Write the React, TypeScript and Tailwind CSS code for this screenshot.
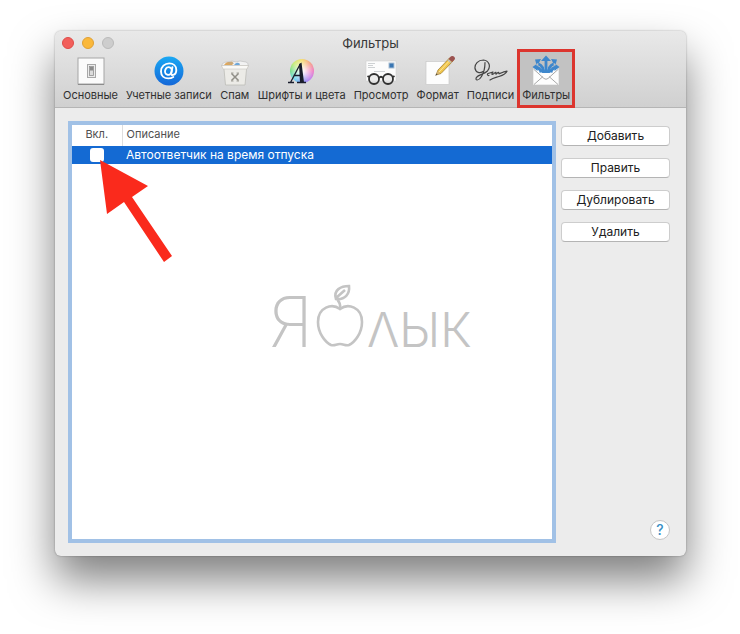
import type { ReactNode } from "react";

function SwitchIcon() {
  return (
    <svg width="30" height="32" viewBox="0 0 30 32" aria-hidden="true">
      <rect x="2" y="3" width="26" height="26" fill="#fbfbfb" stroke="#a5a5a5" />
      <path d="M2 29.500h26" stroke="#8c8c8c" />
      <rect x="11.500" y="9.500" width="8" height="13" fill="#ececec" stroke="#a8a8a8" />
      <rect x="13.500" y="11.500" width="4" height="9" fill="#dcdcdc" stroke="#8f8f8f" strokeWidth=".8" />
      <rect x="14" y="12" width="3" height="3.500" fill="#8a8a8a" />
    </svg>
  );
}

function AtIcon() {
  return (
    <svg width="30" height="32" viewBox="0 0 30 32" aria-hidden="true">
      <defs>
        <linearGradient id="at-bg" x1="0" y1="0" x2="0" y2="1">
          <stop offset="0" stopColor="#1ba8f3" />
          <stop offset="1" stopColor="#1467d8" />
        </linearGradient>
      </defs>
      <circle cx="15" cy="16" r="14.500" fill="url(#at-bg)" />
      <g fill="none" stroke="#fff" strokeWidth="1.900" strokeLinecap="round">
        <ellipse cx="14.400" cy="16" rx="3.300" ry="3.900" transform="rotate(18 14.4 16)" />
        <path d="M18.400 12.200l-1.100 5.600c-.3 2 .6 2.400 1.800 2.100 2-.5 3.200-2.700 3.200-5 0-4-3-6.500-7-6.500-4.700 0-8.300 3.400-8.300 8 0 4.300 3.200 7 7.300 7 2 0 3.600-.5 5-1.400" />
      </g>
    </svg>
  );
}

function JunkIcon() {
  return (
    <svg width="30" height="32" viewBox="0 0 30 32" aria-hidden="true">
      <path d="M2 11q0-4 5-4l5-1 4 1 4-1 6 1q3 1 2 4z" fill="#f2f2f2" stroke="#bbb" strokeWidth=".6" />
      <path d="M4 10q3-5 9-1.500l-1 2H4z" fill="#dda75d" />
      <path d="M14 10q3-4 6-1l-1 2h-5z" fill="#6fa7d8" />
      <path d="M7 7.500l5-1 2 2-4 1z" fill="#c9a878" />
      <path d="M1.500 10.500h27l-2 4-1.500 15.500H5.500L4 14.500z" fill="#ecebe7" stroke="#bdbcb8" strokeWidth=".8" />
      <path d="M1.500 10.500h27l-1.500 3.500H3z" fill="#faf9f6" stroke="#c7c5bf" strokeWidth=".6" />
      <path d="M11.500 18.500l7 7M18.500 18.500l-7 7" stroke="#908e87" strokeWidth="1.500" />
      <path d="M11 18h2.500M16.500 18H19M11 26h2.500M16.500 26H19" stroke="#908e87" strokeWidth=".8" />
    </svg>
  );
}

function FontsIcon() {
  return (
    <div
      aria-hidden="true"
      className="relative h-6 w-6 rounded-full bg-[radial-gradient(circle,#fff_5%,transparent_75%),conic-gradient(#f5da62,#f59a7b,#ee72be,#b777ef,#718cf1,#62d5ed,#69dc82,#c5e969,#f5da62)]"
    >
      <svg className="absolute -left-1 top-0" width="30" height="26" viewBox="0 0 30 26">
        <path
          d="M2 23.500h6M11 23.500h9M4.500 23.500L14.500 4.500M7.500 16.500h7"
          fill="none"
          stroke="#191c2c"
          strokeWidth="1.300"
        />
        <path d="M13 5.500l2.500-2L18 23.500h-4z" fill="#191c2c" />
      </svg>
    </div>
  );
}

function ViewIcon() {
  return (
    <svg width="34" height="32" viewBox="0 0 34 32" aria-hidden="true">
      <rect x="2" y="6" width="30" height="20" fill="#fcfcfc" stroke="#d0d0d0" strokeWidth=".6" />
      <path d="M4 8.500h7M4 10.500h5M4 12.500h7M10 16.500h11" stroke="#c2c5c8" strokeWidth=".8" />
      <rect x="25" y="8" width="5" height="5" fill="#3976b3" stroke="#a9bed2" />
      <g fill="#e6e6e6" fillOpacity=".7" stroke="#303030" strokeWidth="1.800">
        <circle cx="10" cy="24" r="5" />
        <circle cx="24" cy="24" r="5" />
        <path d="M15 23q2-2.500 4 0M5 22l-1.500-1M29 22l1.500-1" fill="none" />
      </g>
    </svg>
  );
}

function ComposeIcon() {
  return (
    <svg width="34" height="32" viewBox="0 0 34 32" aria-hidden="true">
      <rect x="5" y="6.500" width="23" height="23" fill="#fdfdfd" stroke="#c9c9c9" strokeWidth=".7" />
      <path d="M15 20l2-5L29 2.500l3.500 3L20 18.500z" fill="#f1c64c" stroke="#987427" strokeWidth=".7" />
      <path d="M18 17L30.500 3.700" stroke="#ffe797" strokeWidth="1" />
      <path d="M27.500 4L30 1.300q2-1 3.400.7 1.200 1.600 0 2.800L31 7z" fill="#9b5250" />
      <path d="M26.800 4.800l3.500 3" stroke="#b9b9b9" strokeWidth="1.300" />
      <path d="M14.500 20.500l2.500-4.500 2 2z" fill="#d4b477" />
      <path d="M14 21l1.800-2.500 .8.800z" fill="#333" />
    </svg>
  );
}

function SignatureIcon() {
  return (
    <svg width="34" height="32" viewBox="0 0 34 32" aria-hidden="true">
      <path
        d="M11 7.500c0 5-1 10-3.500 14-2.500 4.500-7 4.500-5 .8 2-2.800 8-3 11-6.300 4-5 1-10.500-4-11C4 5 .5 9 1 13.500c1 4.500 5 5 8 3M15 20.500c-1.500.5-2-1.500-1-2l5-1.500c-1 1-1.500 2.500-.6 2.500 1.600-.3 2.600-2.500 3.400-2.200.6.400-.6 2 .3 1.800 1-.3 1.600-2 2.500-1.700.7.400-.3 1.400.8 1.200l3.600-1.400 4-1c-1 2.500-4 4-8 5.300-3 1-6 1.500-9 3.500"
        fill="none"
        stroke="#454545"
        strokeWidth="1.200"
        strokeLinecap="round"
        strokeLinejoin="round"
      />
    </svg>
  );
}

function RulesIcon() {
  return (
    <svg width="34" height="32" viewBox="0 0 34 32" aria-hidden="true">
      <rect x="4" y="13" width="26" height="17" fill="#fdfdfd" stroke="#c4c4c4" strokeWidth=".6" />
      <path d="M5 29.500l9-8M29 29.500l-9-8M4.500 14L15 23.500q2 1.500 4 0L29.500 14" fill="none" stroke="#a8a8a8" strokeWidth="1" />
      <g fill="none" stroke="#3e87cc" strokeWidth="2.800">
        <path d="M17 18V5M14.500 18q0-7-5-9M19.500 18q0-7 5-9M12 17.500Q11.500 13 7 12.500M22 17.500q.5-4.500 5-5" />
      </g>
      <path
        d="M17 .5l-5 5.500h10zM12 4l-6 .5 2 7zM22 4l6 .5-2 7zM3.500 12l5.500-4-.5 8zM30.500 12L25 8l.5 8z"
        fill="#3e87cc"
      />
    </svg>
  );
}

const tabs: { label: string; icon: ReactNode; active?: boolean }[] = [
  { label: "Основные", icon: <SwitchIcon /> },
  { label: "Учетные записи", icon: <AtIcon /> },
  { label: "Спам", icon: <JunkIcon /> },
  { label: "Шрифты и цвета", icon: <FontsIcon /> },
  { label: "Просмотр", icon: <ViewIcon /> },
  { label: "Формат", icon: <ComposeIcon /> },
  { label: "Подписи", icon: <SignatureIcon /> },
  { label: "Фильтры", icon: <RulesIcon />, active: true },
];

const actions = ["Добавить", "Править", "Дублировать", "Удалить"];

function Toolbar() {
  return (
    <header className="rounded-t-md border-b border-[#b5b5b5] bg-linear-to-b from-[#e9e9e9] to-[#d0d0d0]">
      <div className="grid h-5 grid-cols-[1fr_auto_1fr] items-center px-[7px] pt-1">
        <div className="flex gap-2">
          <button aria-label="Закрыть" className="h-3 w-3 rounded-full border border-[#df4b48] bg-[#f25f5b]" />
          <button aria-label="Свернуть" className="h-3 w-3 rounded-full border border-[#dfa034] bg-[#fab83b]" />
          <button aria-label="Развернуть" disabled className="h-3 w-3 rounded-full border border-[#bababa] bg-[#cdcdcd]" />
        </div>
        <h1 className="text-[13px] leading-4 text-[#383838]">Фильтры</h1>
      </div>
      <nav className="flex h-14 px-1">
        {tabs.map((tab) => (
          <button
            key={tab.label}
            className={`relative flex flex-col items-center px-1 pt-1 text-[11px] leading-4 whitespace-nowrap text-[#303030] ${tab.active ? "bg-[#c2c2c2]" : ""}`}
          >
            <span className="flex h-8 items-center">{tab.icon}</span>
            <span>{tab.label}</span>
            {tab.active && <span className="absolute -inset-x-px -top-0.5 -bottom-px border-3 border-[#dc352e]" />}
          </button>
        ))}
      </nav>
    </header>
  );
}

function Watermark() {
  return (
    <div className="pointer-events-none absolute inset-x-0 top-[253px] flex items-baseline justify-center gap-0.5 text-[#c4c4c4]">
      <span className="text-[70px] leading-none font-extralight">Я</span>
      <svg width="50" height="63" viewBox="0 0 50 63" fill="none" stroke="currentColor" strokeWidth="2.600" aria-hidden="true">
        <path d="M25 25C17 19 3 23 3 38c0 11 7 20 13 23 4 1 5-1 9-1s5 2 9 1c6-3 13-12 13-23 0-15-14-19-22-13z" />
        <path d="M25 25c1-5-1-8-4-11M21 15C18 6 26 2 34 2c1 8-4 14-13 13zM21 14l9-8" />
      </svg>
      <span className="text-[48px] leading-none font-light">ΛЫК</span>
    </div>
  );
}

function RulesTable() {
  return (
    <div className="relative min-w-0 flex-1 border-4 border-[#a1c1e6] bg-white">
      <table className="w-full table-fixed border-collapse text-left">
        <colgroup>
          <col className="w-[50px]" />
          <col />
        </colgroup>
        <thead>
          <tr className="h-[21px] text-[11px] leading-4 text-[#505050]">
            <th className="border-r border-[#dedede] p-0 pb-1 text-center font-normal">Вкл.</th>
            <th className="p-0 pb-1 pl-1 font-normal">Описание</th>
          </tr>
        </thead>
        <tbody>
          <tr className="h-[18px] bg-[#146ad3] text-xs leading-4 text-white">
            <td className="p-0 text-center">
              <input
                id="rule-vacation"
                type="checkbox"
                className="mx-auto block h-3.5 w-3.5 appearance-none rounded-[3px] bg-white"
              />
            </td>
            <td className="p-0 pl-1">
              <label htmlFor="rule-vacation">Автоответчик на время отпуска</label>
            </td>
          </tr>
        </tbody>
      </table>
      <svg className="absolute top-8 left-7" width="80" height="110" viewBox="0 0 80 110" aria-hidden="true">
        <path d="M0 3L48 29l-16 11 40 59-8 6-40-60-17 12z" fill="#fa2a1c" />
      </svg>
    </div>
  );
}

export default function App() {
  return (
    <div className="flex min-h-screen bg-white pt-[31px] pr-[54px] pb-[78px] pl-[55px] font-['Inter','Noto_Sans',sans-serif]">
      <main className="relative flex min-w-0 flex-1 flex-col rounded-md bg-[#ececec] shadow-[0_24px_44px_rgba(0,0,0,0.5),0_0_2px_rgba(0,0,0,0.35)]">
        <Toolbar />
        <div className="flex flex-1 gap-[5px] pt-[13px] pr-4 pb-[13px] pl-[13px]">
          <RulesTable />
          <aside className="flex w-[109px] flex-col gap-3 pt-[5px]">
            {actions.map((action) => (
              <button
                key={action}
                className="h-5 rounded-sm border border-[#cdcdcd] border-b-[#b4b4b4] bg-white text-xs leading-4 text-[#202020]"
              >
                {action}
              </button>
            ))}
            <button
              aria-label="Справка"
              className="mt-auto mb-[3px] h-5 w-5 self-end rounded-full border border-[#c5c5c5] bg-white text-sm leading-4 font-medium text-[#398fc5]"
            >
              ?
            </button>
          </aside>
        </div>
        <Watermark />
      </main>
    </div>
  );
}
